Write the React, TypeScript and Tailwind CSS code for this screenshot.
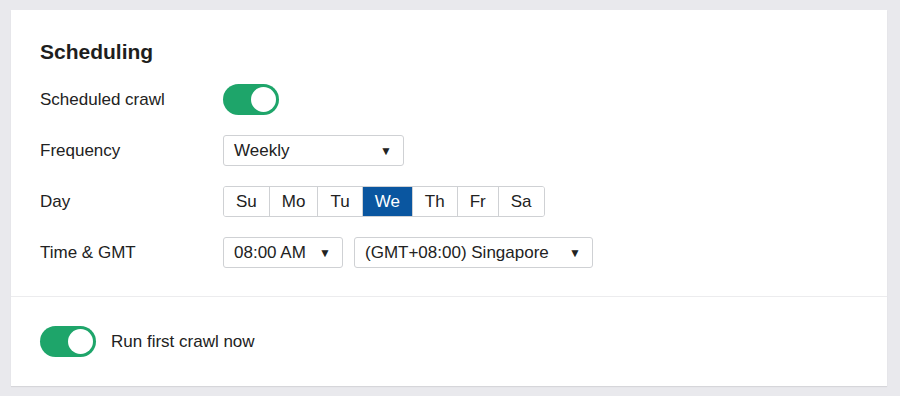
import { useState } from "react";

const DAYS = ["Su", "Mo", "Tu", "We", "Th", "Fr", "Sa"];

function Toggle({ on, onChange }: { on: boolean; onChange: () => void }) {
  return (
    <button
      onClick={onChange}
      className={`flex h-[31px] w-[56px] shrink-0 items-center rounded-full p-[3px] ${
        on ? "justify-end bg-[#1ea56a]" : "justify-start bg-[#cfd2d6]"
      }`}
    >
      <span className="block h-[25px] w-[25px] rounded-full bg-white" />
    </button>
  );
}

function Select({ value, width }: { value: string; width: string }) {
  return (
    <div
      className={`flex h-[31px] items-center justify-between rounded-[3px] border border-[#cfd1d4] bg-white pl-[10px] pr-[11px] ${width}`}
    >
      <span>{value}</span>
      <span className="text-[12px] text-[#222]">▼</span>
    </div>
  );
}

function Row({ label, children }: { label: string; children: React.ReactNode }) {
  return (
    <div className="flex h-[51px] items-center">
      <div className="w-[183px] shrink-0">{label}</div>
      <div className="flex items-center gap-[11px]">{children}</div>
    </div>
  );
}

export default function App() {
  const [scheduled, setScheduled] = useState(true);
  const [runNow, setRunNow] = useState(true);
  const [day, setDay] = useState("We");

  return (
    <div className="min-h-[396px] bg-[#e9e9ed] pl-[11px] pr-[13px] pt-[10px] pb-[10px] font-['Liberation_Sans',Arial,sans-serif] text-[17px] text-[#222]">
      <div className="bg-white shadow-[0_1px_1px_rgba(0,0,0,0.08)]">
        <div className="px-[29px] pt-[27px] pb-[2px]">
          <h2 className="mb-[7px] text-[21px] font-bold leading-[30px] text-[#1e1e1e]">Scheduling</h2>
          <Row label="Scheduled crawl">
            <Toggle on={scheduled} onChange={() => setScheduled(!scheduled)} />
          </Row>
          <Row label="Frequency">
            <Select value="Weekly" width="w-[181px]" />
          </Row>
          <Row label="Day">
            <div className="flex h-[31px] overflow-hidden rounded-[3px] border border-[#cfd1d4]">
              {DAYS.map((d, i) => (
                <button
                  key={d}
                  onClick={() => setDay(d)}
                  className={`px-[12px] ${i > 0 ? "border-l border-[#cfd1d4]" : ""} ${
                    day === d ? "bg-[#0a56a0] text-white" : "bg-white"
                  }`}
                >
                  {d}
                </button>
              ))}
            </div>
          </Row>
          <Row label="Time & GMT">
            <Select value="08:00 AM" width="w-[120px]" />
            <Select value="(GMT+08:00) Singapore" width="w-[239px]" />
          </Row>
        </div>
        <div className="mt-[16px] border-t border-[#ececee]" />
        <div className="flex h-[89px] items-center gap-[15px] px-[29px]">
          <Toggle on={runNow} onChange={() => setRunNow(!runNow)} />
          <span>Run first crawl now</span>
        </div>
      </div>
    </div>
  );
}
